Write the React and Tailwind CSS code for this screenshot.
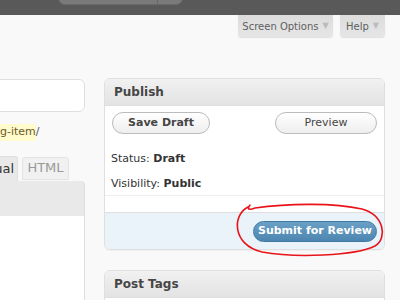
export default function App() {
  const font = { fontFamily: '"DejaVu Sans", "Liberation Sans", sans-serif' };
  return (
    <div className="relative w-[400px] h-[300px] overflow-hidden bg-[#f9f9f9]" style={font}>
      {/* admin header */}
      <div className="h-[15px] bg-[#595959] relative">
        <div className="absolute left-[58px] top-[-10px] w-[125px] h-[15px] rounded-b-[7px] bg-[#7a7a7a] border border-[#6a6a6a] flex justify-end">
          <div className="w-[25px] border-l border-[#666]" />
        </div>
      </div>

      {/* screen meta tabs */}
      <div className="flex justify-end gap-[7px] pr-[15px]">
        <div className="w-[95px] h-[22px] flex items-center justify-center gap-[4px] rounded-b-[3px] bg-gradient-to-b from-[#dcdcdc] to-[#e6e6e6] text-[10px] text-[#5e5e5e] shadow-[0_1px_1px_rgba(0,0,0,0.1)]">
          Screen Options <span className="text-[8px] text-[#bbb]">▼</span>
        </div>
        <div className="w-[45px] h-[22px] flex items-center justify-center gap-[4px] rounded-b-[3px] bg-gradient-to-b from-[#dcdcdc] to-[#e6e6e6] text-[10px] text-[#5e5e5e] shadow-[0_1px_1px_rgba(0,0,0,0.1)]">
          Help <span className="text-[8px] text-[#bbb]">▼</span>
        </div>
      </div>

      <div className="flex mt-[41px]">
        {/* left column (post body) */}
        <div className="w-[85px] shrink-0 overflow-hidden">
          <div className="-ml-[10px] mt-[1px] h-[33px] bg-white border border-[#dfdfdf] rounded-[6px]" />
          <div className="mt-[12px] text-[11px] text-[#555] flex">
            <span className="bg-[#fffbcc] text-[#6d5a2a]">g-item</span>
            <span>/</span>
          </div>
          <div className="mt-[15px] flex items-end gap-[4px] h-[25px]">
            <div className="-ml-[30px] w-[48px] h-[25px] bg-[#e9e9e9] border border-[#dfdfdf] border-b-0 rounded-t-[3px] flex items-center justify-end pr-[3px] text-[13px] text-[#333]">
              Visual
            </div>
            <div className="w-[47px] h-[23px] mb-[1px] bg-[#f1f1f1] border border-[#e3e3e3] rounded-t-[3px] flex items-center justify-center text-[13px] text-[#999]">
              HTML
            </div>
          </div>
          <div className="h-[35px] bg-[#e9e9e9] border-r border-[#dfdfdf] rounded-tr-[4px]" />
          <div className="h-[90px] bg-white border-r border-[#dfdfdf]" />
        </div>

        {/* right column */}
        <div className="ml-[19px] w-[281px] shrink-0">
          <div className="rounded-[6px] border border-[#dfdfdf] bg-white overflow-hidden shadow-[0_1px_1px_rgba(0,0,0,0.04)]">
            <div className="h-[27px] bg-gradient-to-b from-[#f1f1f1] to-[#e3e3e3] border-b border-[#dfdfdf] flex items-center pl-[9px] text-[12px] font-bold text-[#464646]">
              Publish
            </div>
            <div className="px-[7px] pt-[6px] flex justify-between">
              <div className="w-[98px] h-[22px] rounded-full border border-[#bbb] bg-gradient-to-b from-white to-[#eee] flex items-center justify-center text-[11px] font-bold text-[#464646]">
                Save Draft
              </div>
              <div className="w-[102px] h-[22px] rounded-full border border-[#bbb] bg-gradient-to-b from-white to-[#eee] flex items-center justify-center text-[11px] text-[#464646]">
                Preview
              </div>
            </div>
            <div className="px-[6px] pt-[18px] text-[11px] text-[#333]">
              <div className="h-[14px] flex items-center">
                Status:&nbsp;<b className="font-bold">Draft</b>
              </div>
              <div className="mt-[11px] h-[14px] flex items-center">
                Visibility:&nbsp;<b className="font-bold">Public</b>
              </div>
            </div>
            <div className="mt-[4px] border-t border-[#eee] h-[17px]" />
            <div className="h-[37px] bg-[#eaf2fa] border-t border-[#dfdfdf] flex items-center justify-end pr-[7px]">
              <div className="w-[124px] h-[21px] rounded-full bg-gradient-to-b from-[#6aa0c6] to-[#4c86b0] border border-[#3f78a2] flex items-center justify-center text-[11px] font-bold text-white">
                Submit for Review
              </div>
            </div>
          </div>

          <div className="mt-[20px] rounded-t-[6px] border border-[#dfdfdf] bg-white overflow-hidden">
            <div className="h-[27px] bg-gradient-to-b from-[#f1f1f1] to-[#e3e3e3] border-b border-[#dfdfdf] flex items-center pl-[9px] text-[12px] font-bold text-[#464646]">
              Post Tags
            </div>
            <div className="h-[40px]" />
          </div>
        </div>
      </div>

      {/* hand-drawn annotation */}
      <svg className="absolute left-0 top-0 pointer-events-none" width="400" height="300">
        <path
          d="M 248 207 C 232 215, 232 245, 262 252 C 295 258, 355 256, 375 246 C 388 238, 384 215, 362 209 C 335 203, 290 203, 255 208 C 250 210, 246 210, 250 205"
          fill="none"
          stroke="#e8141a"
          strokeWidth="1.6"
          strokeLinecap="round"
        />
      </svg>
    </div>
  );
}
